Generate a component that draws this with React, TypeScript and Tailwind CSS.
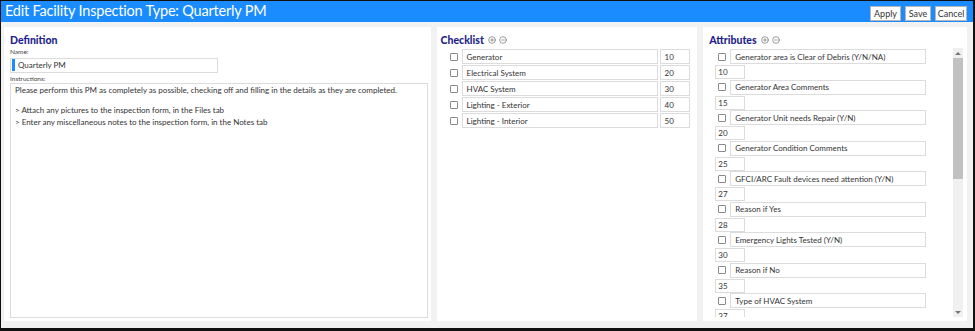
import { CirclePlus, CircleMinus } from "lucide-react";

const checklist = [
  { label: "Generator", seq: "10" },
  { label: "Electrical System", seq: "20" },
  { label: "HVAC System", seq: "30" },
  { label: "Lighting - Exterior", seq: "40" },
  { label: "Lighting - Interior", seq: "50" },
];

const attributes = [
  { label: "Generator area is Clear of Debris (Y/N/NA)", seq: "10" },
  { label: "Generator Area Comments", seq: "15" },
  { label: "Generator Unit needs Repair (Y/N)", seq: "20" },
  { label: "Generator Condition Comments", seq: "25" },
  { label: "GFCI/ARC Fault devices need attention (Y/N)", seq: "27" },
  { label: "Reason if Yes", seq: "28" },
  { label: "Emergency Lights Tested (Y/N)", seq: "30" },
  { label: "Reason if No", seq: "35" },
  { label: "Type of HVAC System", seq: "37" },
];

const buttons = [
  { label: "Apply", w: "w-[31px]" },
  { label: "Save", w: "w-[26px]" },
  { label: "Cancel", w: "w-[32px]" },
];

function Box() {
  return <div className="w-[8px] h-[8px] border border-[#8a8a8a] rounded-[1px] bg-white shrink-0" />;
}

function Heading({ title, tools }: { title: string; tools?: boolean }) {
  return (
    <div className="flex items-center gap-x-[3px] h-[14px]">
      <span className="text-[10.5px] font-black text-[#1f1f8c] leading-none">{title}</span>
      {tools && (
        <div className="flex items-center gap-x-[3px] ml-[1px] text-[#555]">
          <CirclePlus className="w-[8px] h-[8px]" strokeWidth={1.7} />
          <CircleMinus className="w-[8px] h-[8px]" strokeWidth={1.7} />
        </div>
      )}
    </div>
  );
}

export default function App() {
  return (
    <div
      className="w-[975px] h-[331px] border-l border-t border-r-2 border-b-[3px] border-[#111] bg-[#f2f2f2] flex flex-col overflow-hidden text-[#333]"
      style={{ fontFamily: 'Lato, "Open Sans", sans-serif' }}
    >
      {/* Title bar */}
      <div className="h-[21px] bg-[#1a8cff] flex items-center justify-between pl-[4px] pr-[6px] shrink-0">
        <span className="text-white text-[14.5px] leading-none tracking-[-0.2px]">
          Edit Facility Inspection Type: Quarterly PM
        </span>
        <div className="flex gap-x-[4px] mt-[3px]">
          {buttons.map((b) => (
            <button
              key={b.label}
              className={`${b.w} h-[15px] bg-white border border-[#b5b5b5] text-[9px] leading-none text-[#333]`}
            >
              {b.label}
            </button>
          ))}
        </div>
      </div>

      <div className="flex flex-1 gap-x-[6px] pl-[3px] pr-[6px] pt-[5px] pb-[7px] min-h-0">
        {/* Definition */}
        <div className="w-[427px] bg-white pl-[6px] pr-[3px] pt-[6px] flex flex-col">
          <Heading title="Definition" />
          <div className="text-[6.5px] text-[#444] mt-[2px] leading-none">Name:</div>
          <div className="w-[208px] h-[15px] border border-[#dcdcdc] mt-[2px] flex items-center">
            <div className="w-[3px] h-[12px] bg-[#1a8cff] ml-[1px]" />
            <span className="text-[8px] ml-[3px] text-[#333]">Quarterly PM</span>
          </div>
          <div className="text-[6.5px] text-[#444] mt-[3px] leading-none">Instructions:</div>
          <div className="flex-1 border border-[#dcdcdc] mt-[1px] mb-[3px] px-[4px] text-[8px] leading-[12px] text-[#333]">
            <div className="whitespace-nowrap">
              Please perform this PM as completely as possible, checking off and filling in the details as they are completed.
            </div>
            <div className="h-[8px]" />
            <div>&gt; Attach any pictures to the inspection form, in the Files tab</div>
            <div>&gt; Enter any miscellaneous notes to the inspection form, in the Notes tab</div>
          </div>
        </div>

        {/* Checklist */}
        <div className="w-[261px] bg-white pl-[4px] pt-[6px] flex flex-col">
          <Heading title="Checklist" tools />
          <div className="flex flex-col gap-y-[1px] mt-[2px] pl-[9px]">
            {checklist.map((c) => (
              <div key={c.label} className="flex items-center h-[15px]">
                <Box />
                <div className="w-[196px] h-[15px] border border-[#dcdcdc] ml-[4px] flex items-center pl-[4px] text-[8px]">
                  {c.label}
                </div>
                <div className="w-[30px] h-[15px] border border-[#dcdcdc] ml-[2px] flex items-center pl-[4px] text-[8px]">
                  {c.seq}
                </div>
              </div>
            ))}
          </div>
        </div>

        {/* Attributes */}
        <div className="w-[264px] bg-white pl-[6px] pt-[6px] flex flex-col min-h-0">
          <Heading title="Attributes" tools />
          <div className="flex flex-1 min-h-0 mt-[2px] pb-[4px]">
            <div className="flex-1 overflow-hidden pl-[6px]">
              {attributes.map((a) => (
                <div key={a.label} className="h-[30.5px]">
                  <div className="flex items-center h-[15px]">
                    <div className="ml-[3px]">
                      <Box />
                    </div>
                    <div className="w-[196px] h-[15px] border border-[#dcdcdc] ml-[4px] flex items-center pl-[4px] text-[8px]">
                      {a.label}
                    </div>
                  </div>
                  <div className="w-[30px] h-[14px] border border-[#dcdcdc] mt-[1px] flex items-center pl-[2px] text-[8px]">
                    {a.seq}
                  </div>
                </div>
              ))}
            </div>
            {/* scrollbar */}
            <div className="w-[10px] bg-[#f0f0f0] flex flex-col mr-[4px] -mt-[1px]">
              <div className="h-[10px] flex items-center justify-center">
                <div className="w-0 h-0 border-l-[3px] border-r-[3px] border-b-[3px] border-l-transparent border-r-transparent border-b-[#777]" />
              </div>
              <div className="h-[121px] bg-[#c1c1c1]" />
              <div className="flex-1" />
              <div className="h-[10px] flex items-center justify-center">
                <div className="w-0 h-0 border-l-[3px] border-r-[3px] border-t-[3px] border-l-transparent border-r-transparent border-t-[#777]" />
              </div>
            </div>
          </div>
        </div>
      </div>
    </div>
  );
}
